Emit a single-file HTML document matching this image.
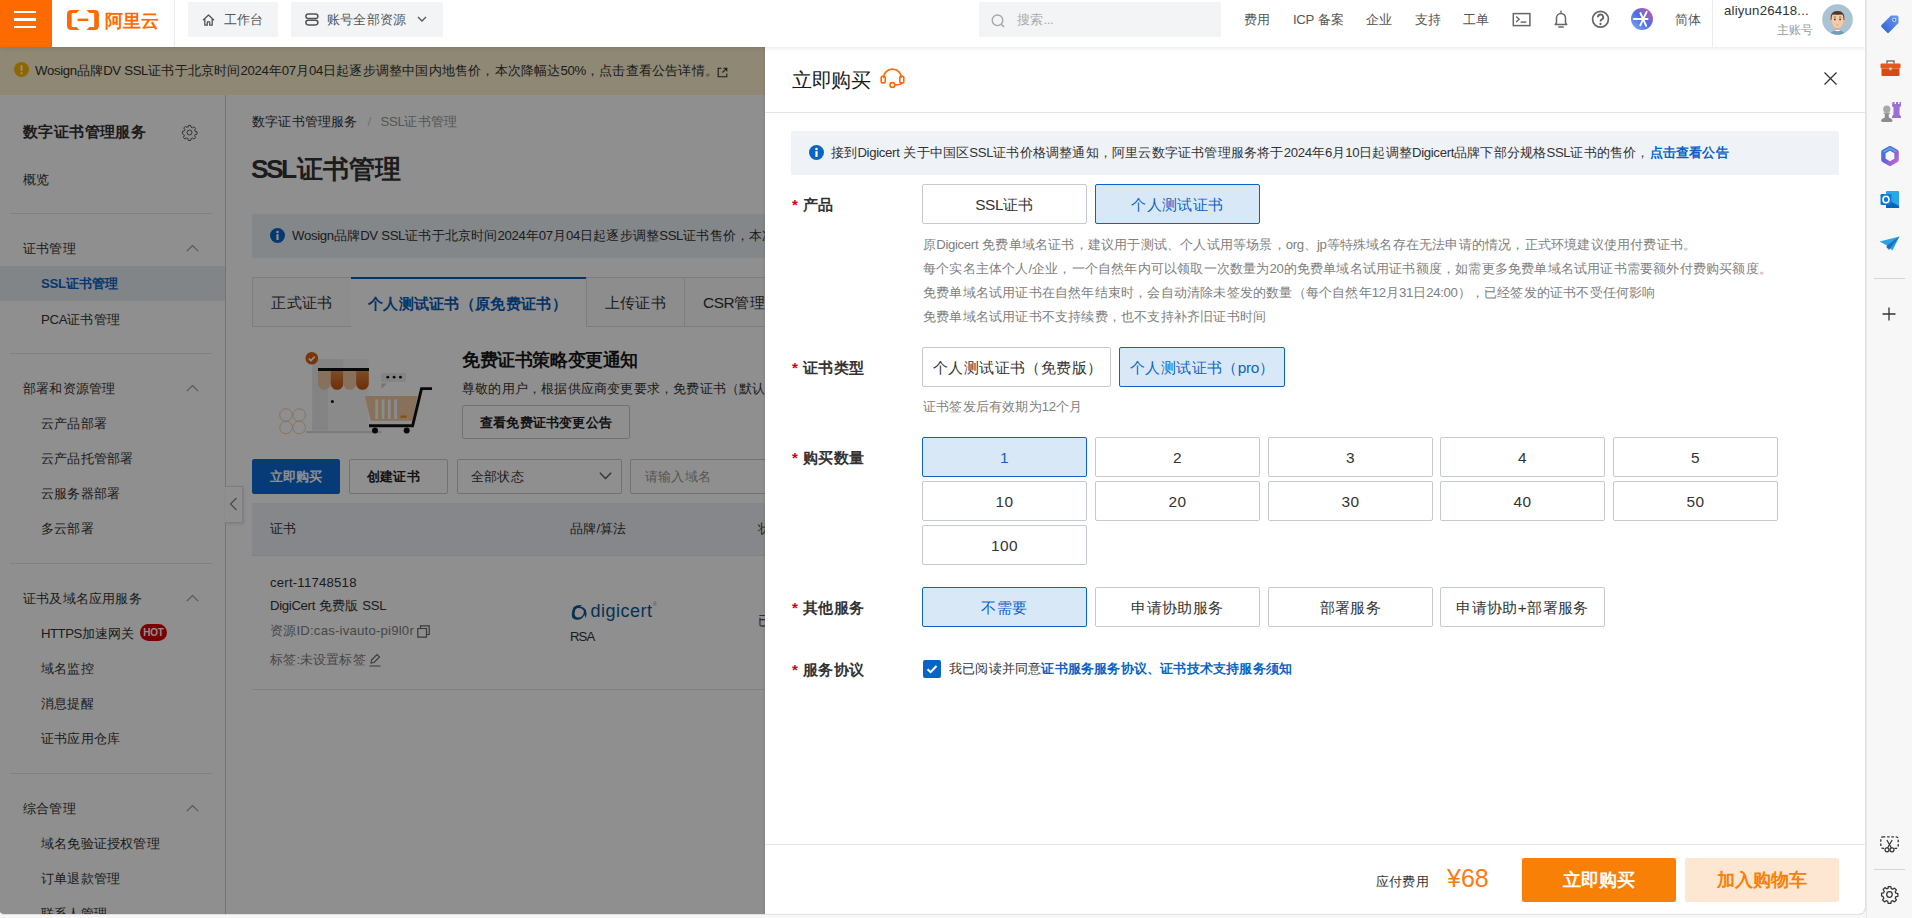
<!DOCTYPE html>
<html><head><meta charset="utf-8">
<style>
*{box-sizing:border-box;margin:0;padding:0}
html,body{width:1912px;height:918px;overflow:hidden;background:#f7f7f7;font-family:"Liberation Sans",sans-serif;color:#333}
.a{position:absolute;white-space:nowrap}
#page{position:absolute;left:0;top:0;width:1866px;height:915px;overflow:hidden;background:#fff;border-radius:0 0 7px 4px;border-right:1px solid #e2e2e2;border-bottom:1px solid #e2e2e2}
#top svg{z-index:1}
#top{position:absolute;left:0;top:0;width:1866px;height:47px;background:#fff;z-index:5;box-shadow:0 1px 5px rgba(0,0,0,.1)}
.tb{position:absolute;top:2px;height:35px;background:#f3f4f6;border-radius:2px}
.nav{position:absolute;top:11px;font-size:13.2px;letter-spacing:.2px;color:#555;line-height:18px}
#banner{position:absolute;left:0;top:47px;width:1866px;height:48px;background:#fdf2cf}
#side{position:absolute;left:0;top:95px;width:226px;height:820px;background:#fff;border-right:1px solid #ccd1d7}
#main{position:absolute;left:226px;top:95px;width:1640px;height:820px;background:#fff}
#mask{position:absolute;left:0;top:47px;width:1866px;height:868px;background:rgba(0,0,0,.44);z-index:3}
#drawer{position:absolute;left:765px;top:47px;width:1101px;height:868px;background:#fff;z-index:4;box-shadow:-1px 0 2px rgba(0,0,0,.08)}
#rb{position:absolute;left:1866px;top:0;width:46px;height:918px;background:#f7f7f7}

.lbl{position:absolute;left:27px;margin-top:1px;font-size:15.4px;font-weight:bold;color:#333;line-height:20px;white-space:nowrap;letter-spacing:.5px}
.lbl:before{content:"*";color:#d0021b;font-weight:bold;margin-right:5px;font-size:15px;letter-spacing:0}
.opt{position:absolute;height:40px;border:1px solid #c5c9d0;border-radius:2px;background:#fff;font-size:15.4px;color:#333;line-height:38px;padding-top:1px;text-align:center;white-space:nowrap;letter-spacing:.4px}
.opt.sel{border-color:#0a64c8;background:#d9e8f6;color:#0a64c8}
.desc{position:absolute;left:158px;font-size:13.2px;color:#808080;line-height:18px;white-space:nowrap;letter-spacing:.2px}
.f13{font-size:13.2px;letter-spacing:.2px}

.t13{position:absolute;white-space:nowrap;font-size:13.2px;letter-spacing:.2px;line-height:18px;color:#333}
.sdiv{position:absolute;left:10px;width:202px;height:1px;background:#e5e5e5}
.chev{position:absolute;left:186px;width:13px;height:8px}

.btn{position:absolute;height:35px;border:1px solid #c9ccd1;border-radius:2px;background:#fff;font-size:13.2px;line-height:33px;text-align:center;white-space:nowrap;color:#333}
.tab{position:absolute;top:182px;height:50px;border:1px solid #dcdfe4;background:#fbfbfc;font-size:15.4px;letter-spacing:.4px;line-height:50px;white-space:nowrap;color:#333;text-align:center}
.l{font-style:normal;letter-spacing:-.025em}
</style></head><body>
<div id="page">
  <div id="top">
    <div class="a" style="left:0;top:0;width:52px;height:47px;background:#ff6a00"></div>
    <div class="a" style="left:14px;top:11px;width:22px;height:2px;background:#fff"></div>
    <div class="a" style="left:14px;top:18px;width:22px;height:2.5px;background:#fff"></div>
    <div class="a" style="left:14px;top:26px;width:22px;height:2px;background:#fff"></div>
    <div class="a" style="left:174px;top:0;width:1px;height:47px;background:#ececec"></div>
    <svg class="a" style="left:67px;top:10px" width="92" height="21" viewBox="0 0 92 21">
      <path d="M4.2 0 H12.4 L9.6 2.9 H5.6 Q4.7 2.9 4.7 3.8 V16.2 Q4.7 17.1 5.6 17.1 H9.6 L12.4 20 H4.2 Q0 20 0 15.8 V4.2 Q0 0 4.2 0Z" fill="#ff6a00"/>
      <path d="M27.7 0 H19.5 L22.3 2.9 H26.3 Q27.2 2.9 27.2 3.8 V16.2 Q27.2 17.1 26.3 17.1 H22.3 L19.5 20 H27.7 Q31.9 20 31.9 15.8 V4.2 Q31.9 0 27.7 0Z" fill="#ff6a00"/>
      <rect x="10.6" y="8.6" width="10.7" height="2.4" fill="#ff6a00"/>
    </svg>
    <div class="a" style="left:105px;top:10px;font-size:17.6px;font-weight:bold;line-height:22px;color:#ff6a00;letter-spacing:-.2px">阿里云</div>
    <svg class="a" style="left:202px;top:14px" width="13" height="12" viewBox="0 0 13 12"><path d="M1 6.2 L6.5 1 L12 6.2 M2.8 4.8 V11.2 H5.3 V7.8 H7.7 V11.2 H10.2 V4.8" fill="none" stroke="#555" stroke-width="1.3" stroke-linejoin="round"/></svg>
    <svg class="a" style="left:305px;top:13px" width="14" height="13" viewBox="0 0 14 13"><rect x="0.9" y="0.9" width="12" height="4.6" rx="2.3" fill="none" stroke="#555" stroke-width="1.5"/><rect x="0.9" y="7.3" width="12" height="4.6" rx="2.3" fill="none" stroke="#555" stroke-width="1.5"/></svg>
    <svg class="a" style="left:417px;top:16px" width="10" height="7" viewBox="0 0 10 7"><path d="M1 1 L5 5 L9 1" fill="none" stroke="#555" stroke-width="1.3"/></svg>
    <svg class="a" style="left:991px;top:14px" width="15" height="14" viewBox="0 0 15 14"><circle cx="6.5" cy="6.3" r="5.3" fill="none" stroke="#a8a8a8" stroke-width="1.4"/><path d="M10.3 10.2 L13 12.9" stroke="#a8a8a8" stroke-width="1.5"/></svg>
    <svg class="a" style="left:1512px;top:12px" width="19" height="15" viewBox="0 0 19 15"><rect x="1.3" y="1.6" width="16.6" height="12" fill="none" stroke="#666" stroke-width="1.5"/><path d="M4.2 4.4 L7.2 7.2 L4.2 10" fill="none" stroke="#666" stroke-width="1.4"/><rect x="8.6" y="9.4" width="5.8" height="1.4" fill="#666"/></svg>
    <svg class="a" style="left:1553px;top:10px" width="16" height="19" viewBox="0 0 16 19"><path d="M8 1.2 V2.2 M2.2 14.6 H13.8 L12.5 12.8 V8 A4.5 4.5 0 0 0 3.5 8 V12.8z M5.8 17 H10.2" fill="none" stroke="#666" stroke-width="1.5" stroke-linejoin="round" stroke-linecap="round"/></svg>
    <svg class="a" style="left:1591px;top:10px" width="19" height="19" viewBox="0 0 19 19"><circle cx="9.5" cy="9.3" r="7.9" fill="none" stroke="#666" stroke-width="1.7"/><path d="M7 7.3 A2.6 2.6 0 1 1 10.4 9.6 Q9.5 10.1 9.5 11.6" fill="none" stroke="#666" stroke-width="1.9"/><circle cx="9.5" cy="14" r="1.15" fill="#666"/></svg>
    <svg class="a" style="left:1631px;top:8px" width="22" height="22" viewBox="0 0 22 22"><defs><linearGradient id="aig" x1="1" y1="0" x2="0" y2="1"><stop offset="0" stop-color="#e0559a"/><stop offset=".5" stop-color="#4a6fe6"/><stop offset="1" stop-color="#7fb0f5"/></linearGradient></defs><circle cx="11" cy="11" r="11" fill="url(#aig)"/><path d="M2.8 11 H16.6 M9.3 17.3 L15.6 3.8 M9.4 5 L15.2 17.8" stroke="#fff" stroke-width="1.9" stroke-linecap="round"/></svg>
    <svg class="a" style="left:1822px;top:4px" width="31" height="31" viewBox="0 0 31 31"><defs><clipPath id="avc"><circle cx="15.5" cy="15.5" r="15.3"/></clipPath></defs><circle cx="15.5" cy="15.5" r="15.3" fill="#a9c3d3"/><g clip-path="url(#avc)"><path d="M7.5 31 Q8.5 27 15.5 26.2 Q22.5 27 23.5 31z" fill="#6f9dbf"/><path d="M13.3 22 H17.7 V26.8 Q15.5 27.8 13.3 26.8z" fill="#e9a58e"/><rect x="13.3" y="26" width="4.4" height="1" fill="#fff"/><ellipse cx="8.9" cy="16.2" rx="1.2" ry="1.8" fill="#f2b99a"/><ellipse cx="22.1" cy="16.2" rx="1.2" ry="1.8" fill="#f2b99a"/><path d="M9.2 11 Q9.2 24 15.5 24.3 Q21.8 24 21.8 11z" fill="#f7caa6"/><path d="M8.6 16.5 Q7.6 6.8 15.5 6.9 Q23.4 6.8 22.4 16.5 L21.6 16 Q21.6 11.8 20.4 10.6 Q15.5 10.9 10.6 10.6 Q9.4 11.8 9.4 16z" fill="#5a3327"/><path d="M11.6 13.3 Q12.8 12.6 14 13.1 M17 13.1 Q18.2 12.6 19.4 13.3" stroke="#6b4a3a" stroke-width=".7" fill="none"/><circle cx="12.9" cy="15.4" r=".85" fill="#333"/><circle cx="18.1" cy="15.4" r=".85" fill="#333"/><path d="M14.5 21 H16.5" stroke="#c98a72" stroke-width=".7"/></g></svg>

    <div class="tb" style="left:188px;width:90px"></div>
    <div class="tb" style="left:291px;width:152px"></div>
    <div class="nav" style="left:224px">工作台</div>
    <div class="nav" style="left:327px">账号全部资源</div>
    <div class="tb" style="left:979px;width:242px"></div>
    <div class="nav" style="left:1017px;color:#aaa">搜索<i class="l">...</i></div>
    <div class="nav" style="left:1244px">费用</div>
    <div class="nav" style="left:1293px"><i class="l">ICP</i> 备案</div>
    <div class="nav" style="left:1366px">企业</div>
    <div class="nav" style="left:1415px">支持</div>
    <div class="nav" style="left:1463px">工单</div>
    <div class="nav" style="left:1675px">简体</div>
    <div class="a" style="left:1712px;top:0;width:1px;height:47px;background:#ececec"></div>
    <div class="nav" style="left:1724px;top:2px;color:#333">aliyun26418...</div>
    <div class="nav" style="left:1777px;top:21px;color:#999;font-size:12px;letter-spacing:0">主账号</div>
  </div>
  <div id="banner">
    <svg class="a" style="left:14px;top:15px" width="15" height="15" viewBox="0 0 15 15"><circle cx="7.5" cy="7.5" r="7.5" fill="#ffb800"/><rect x="6.5" y="3" width="2" height="6" rx="1" fill="#fff"/><circle cx="7.5" cy="11.3" r="1.1" fill="#fff"/></svg>
    <div class="t13" style="left:35px;top:15px"><i class="l">Wosign</i>品牌<i class="l">DV SSL</i>证书于北京时间<i class="l">2024</i>年<i class="l">07</i>月<i class="l">04</i>日起逐步调整中国内地售价，本次降幅达<i class="l">50%</i>，点击查看公告详情。</div>
    <svg class="a" style="left:717px;top:20px" width="11" height="11" viewBox="0 0 11 11"><path d="M4.5 1.2 H1.2 V9.8 H9.8 V6.5 M6.5 1.2 H9.8 V4.5 M9.6 1.4 L5.5 5.5" fill="none" stroke="#333" stroke-width="1.1"/></svg>
  </div>
  <div id="side">
    <div class="a" style="left:23px;top:27px;font-size:15.4px;font-weight:bold;letter-spacing:.4px;line-height:20px;color:#333">数字证书管理服务</div>
    <svg class="a" style="left:181px;top:29px" width="17" height="17" viewBox="0 0 24 24"><path d="M12 8.5a3.5 3.5 0 1 0 0 7 3.5 3.5 0 0 0 0-7z M10.3 2h3.4l.5 2.6 1.9.8 2.2-1.5 2.4 2.4-1.5 2.2.8 1.9 2.6.5v3.4l-2.6.5-.8 1.9 1.5 2.2-2.4 2.4-2.2-1.5-1.9.8-.5 2.6h-3.4l-.5-2.6-1.9-.8-2.2 1.5-2.4-2.4 1.5-2.2-.8-1.9L2 13.7v-3.4l2.6-.5.8-1.9-1.5-2.2 2.4-2.4 2.2 1.5 1.9-.8z" fill="none" stroke="#555" stroke-width="1.4" stroke-linejoin="round"/></svg>
    <div class="t13" style="left:23px;top:76px">概览</div>
    <div class="sdiv" style="top:118px"></div>
    <div class="t13" style="left:23px;top:145px">证书管理</div><svg class="chev" style="top:149px" viewBox="0 0 13 8"><path d="M0.8 7.2 L6.5 1.5 L12.2 7.2" fill="none" stroke="#999" stroke-width="1.1"/></svg>
    <div class="a" style="left:0;top:171px;width:225px;height:35px;background:#e8edf3"></div>
    <div class="t13" style="left:41px;top:180px;font-weight:bold;color:#0a64c8"><i class="l">SSL</i>证书管理</div>
    <div class="t13" style="left:41px;top:216px"><i class="l">PCA</i>证书管理</div>
    <div class="sdiv" style="top:258px"></div>
    <div class="t13" style="left:23px;top:285px">部署和资源管理</div><svg class="chev" style="top:289px" viewBox="0 0 13 8"><path d="M0.8 7.2 L6.5 1.5 L12.2 7.2" fill="none" stroke="#999" stroke-width="1.1"/></svg>
    <div class="t13" style="left:41px;top:320px">云产品部署</div>
    <div class="t13" style="left:41px;top:355px">云产品托管部署</div>
    <div class="t13" style="left:41px;top:390px">云服务器部署</div>
    <div class="t13" style="left:41px;top:425px">多云部署</div>
    <div class="sdiv" style="top:468px"></div>
    <div class="t13" style="left:23px;top:495px">证书及域名应用服务</div><svg class="chev" style="top:499px" viewBox="0 0 13 8"><path d="M0.8 7.2 L6.5 1.5 L12.2 7.2" fill="none" stroke="#999" stroke-width="1.1"/></svg>
    <div class="t13" style="left:41px;top:530px"><span style="letter-spacing:-.5px">HTTPS</span>加速网关</div>
    <div class="a" style="left:140px;top:529px;width:27px;height:17px;border-radius:9px;background:#d80000;color:#fff;font-size:10px;font-weight:bold;line-height:17px;text-align:center;letter-spacing:-.2px">HOT</div>
    <div class="t13" style="left:41px;top:565px">域名监控</div>
    <div class="t13" style="left:41px;top:600px">消息提醒</div>
    <div class="t13" style="left:41px;top:635px">证书应用仓库</div>
    <div class="sdiv" style="top:678px"></div>
    <div class="t13" style="left:23px;top:705px">综合管理</div><svg class="chev" style="top:709px" viewBox="0 0 13 8"><path d="M0.8 7.2 L6.5 1.5 L12.2 7.2" fill="none" stroke="#999" stroke-width="1.1"/></svg>
    <div class="t13" style="left:41px;top:740px">域名免验证授权管理</div>
    <div class="t13" style="left:41px;top:775px">订单退款管理</div>
    <div class="t13" style="left:41px;top:810px">联系人管理</div>
  </div>
  <div id="main">
    <div class="t13" style="left:26px;top:18px">数字证书管理服务<span style="color:#ccc;margin:0 9px 0 10px">/</span><span style="color:#999"><i class="l">SSL</i>证书管理</span></div>
    <div class="a" style="left:25px;top:57px;font-size:26.4px;font-weight:bold;line-height:34px;color:#333;letter-spacing:.2px"><i class="l" style="letter-spacing:-2.6px;margin-right:2px">SSL</i>证书管理</div>
    <div class="a" style="left:26px;top:119px;width:1000px;height:44px;background:#ebf0f7;border-radius:2px"></div>
    <svg class="a" style="left:44px;top:133px" width="15" height="15" viewBox="0 0 15 15"><circle cx="7.5" cy="7.5" r="7.5" fill="#0a64c8"/><circle cx="7.5" cy="4" r="1.3" fill="#fff"/><rect x="6.4" y="6.2" width="2.2" height="5.8" fill="#fff"/></svg>
    <div class="t13" style="left:66px;top:132px"><i class="l">Wosign</i>品牌<i class="l">DV SSL</i>证书于北京时间<i class="l">2024</i>年<i class="l">07</i>月<i class="l">04</i>日起逐步调整<i class="l">SSL</i>证书售价，本次降幅达<i class="l">50%</i></div>
    <div class="a" style="left:26px;top:231px;width:1000px;height:1px;background:#dcdfe4"></div>
    <div class="tab" style="left:26px;width:100px">正式证书</div>
    <div class="a" style="left:125px;top:182px;width:236px;height:50px;background:#fff;border-right:1px solid #dcdfe4;border-top:2px solid #0a5cb5"></div>
    <div class="a" style="left:142px;top:198.5px;font-size:15.4px;font-weight:bold;letter-spacing:.3px;line-height:20px;color:#0a5cb5">个人测试证书（原免费证书）</div>
    <div class="tab" style="left:360px;width:99px">上传证书</div>
    <div class="tab" style="left:458px;width:120px;text-align:left;padding-left:18px"><i class="l">CSR</i>管理</div>

    <svg class="a" style="left:44px;top:245px" width="170" height="105" viewBox="0 0 170 105">
      <defs><linearGradient id="ag" x1="0" y1="0" x2="0" y2="1"><stop offset="0" stop-color="#d98a4a"/><stop offset="1" stop-color="#c8500a"/></linearGradient></defs>
      <rect x="42.3" y="19" width="56" height="71.5" fill="#f6f6f6"/>
      <rect x="42.3" y="19" width="31" height="9" fill="#ececec"/>
      <rect x="42.3" y="28" width="15.5" height="62.5" fill="#e9e9e9"/>
      <rect x="36" y="91" width="75.6" height="2.2" fill="#dcdcdc"/>
      <rect x="48" y="28" width="51" height="3" fill="#111"/>
      <path d="M48 31 h12.7 v12.5 a6.35 6.35 0 0 1 -12.7 0z" fill="#f0c8a4"/>
      <path d="M60.7 31 h12.7 v12.5 a6.35 6.35 0 0 1 -12.7 0z" fill="url(#ag)"/>
      <path d="M73.4 31 h12.7 v12.5 a6.35 6.35 0 0 1 -12.7 0z" fill="#f0c8a4"/>
      <path d="M86.1 31 h12.7 v12.5 a6.35 6.35 0 0 1 -12.7 0z" fill="url(#ag)"/>
      <circle cx="41.8" cy="18.3" r="6.3" fill="#d4620f"/>
      <path d="M38.9 18.6 l2 2 l3.8 -4" stroke="#fff" stroke-width="1.6" fill="none"/>
      <circle cx="62.4" cy="61.4" r="1.5" fill="#111"/>
      <rect x="111" y="33" width="25" height="9" fill="#eeeeee"/>
      <path d="M111.5 43.5 l5.5 0 l-5.5 5z" fill="#cfcfcf"/>
      <circle cx="117.8" cy="37.2" r="1.4" fill="#111"/><circle cx="124.1" cy="37.2" r="1.4" fill="#111"/><circle cx="130.4" cy="37.2" r="1.4" fill="#111"/>
      <path d="M95 56 H147.6 L142.4 80.7 H100.7z" fill="#f2c9a0"/>
      <rect x="105.3" y="59.5" width="2.9" height="19.5" fill="#f8f8f8"/><rect x="111.6" y="59.5" width="2.9" height="19.5" fill="#f8f8f8"/><rect x="117.8" y="59.5" width="2.9" height="19.5" fill="#f8f8f8"/><rect x="124.1" y="59.5" width="2.9" height="19.5" fill="#f8f8f8"/>
      <rect x="130.4" y="75.5" width="6.3" height="2.3" fill="#e8902a"/>
      <path d="M162 48.6 H151.5 L142.6 85.8 H99" stroke="#111" stroke-width="2.9" fill="none"/>
      <circle cx="105" cy="90.4" r="3" fill="#111"/><circle cx="136.7" cy="90.4" r="3" fill="#111"/>
      <g fill="none" stroke="#f0cfae" stroke-width="1"><circle cx="16" cy="75" r="6.3"/><circle cx="29.2" cy="75" r="6.3"/><circle cx="16" cy="87.5" r="6.3"/><circle cx="29.2" cy="87.5" r="6.3"/></g>
    </svg>
    <div class="a" style="left:236px;top:254px;font-size:17.6px;font-weight:bold;letter-spacing:-.4px;line-height:22px;color:#1a1a1a">免费证书策略变更通知</div>
    <div class="t13" style="left:236px;top:285px">尊敬的用户，根据供应商变更要求，免费证书（默认</div>
    <div class="btn" style="left:236px;top:310px;width:168px;height:34px;line-height:34px;font-weight:bold;letter-spacing:.2px;color:#222">查看免费证书变更公告</div>

    <div class="btn" style="left:26px;top:364px;width:88px;background:#0b6ad6;border-color:#0b6ad6;color:#fff;font-weight:bold;letter-spacing:.2px">立即购买</div>
    <div class="btn" style="left:123px;top:364px;width:99px;font-weight:bold;letter-spacing:.2px;color:#222;text-align:left;padding-left:17px">创建证书</div>
    <div class="btn" style="left:231px;top:364px;width:165px;text-align:left;padding-left:13px;letter-spacing:.2px">全部状态</div>
    <svg class="a" style="left:373px;top:377px" width="13" height="8" viewBox="0 0 13 8"><path d="M0.8 0.8 L6.5 6.5 L12.2 0.8" fill="none" stroke="#555" stroke-width="1.3"/></svg>
    <div class="btn" style="left:404px;top:364px;width:300px;text-align:left;padding-left:14px;color:#999;letter-spacing:.2px">请输入域名</div>
    <div class="a" style="left:26px;top:408px;width:1000px;height:53px;background:#eef1f6;border-bottom:1px solid #e3e6eb"></div>
    <div class="t13" style="left:44px;top:425px">证书</div>
    <div class="t13" style="left:344px;top:425px">品牌<i class="l">/</i>算法</div>
    <div class="t13" style="left:532px;top:425px">状态</div>
    <div class="t13" style="left:44px;top:479px">cert-11748518</div>
    <div class="t13" style="left:44px;top:502px"><i class="l">DigiCert</i> 免费版 <i class="l">SSL</i></div>
    <div class="t13" style="left:44px;top:527px;color:#808080">资源ID:cas-ivauto-pi9l0r</div>
    <svg class="a" style="left:191px;top:530px" width="13" height="13" viewBox="0 0 13 13"><path d="M3.5 3.5 V0.8 H12.2 V9.5 H9.5 M0.8 3.5 H9.5 V12.2 H0.8z" fill="none" stroke="#666" stroke-width="1.2"/></svg>
    <div class="t13" style="left:44px;top:556px;color:#808080">标签<i class="l">:</i>未设置标签</div>
    <svg class="a" style="left:143px;top:558px" width="12" height="14" viewBox="0 0 12 14"><path d="M2 10 L2.5 7 L8 1.5 L10.5 4 L5 9.5z M0.5 13 H11.5" fill="none" stroke="#666" stroke-width="1.1"/></svg>
    <div class="a" style="left:26px;top:594px;width:1000px;height:1px;background:#e3e6eb"></div>
    <svg class="a" style="left:345px;top:509px" width="20" height="19" viewBox="0 0 20 19"><path d="M2.5 3.2 Q6 0.2 11.5 1.2 Q9.5 1.6 9 2.6 Q13.5 3.2 15 6.5 Q16.5 10.5 14.8 14.3 Q14.2 11.5 13.2 11 Q11.5 15.5 6.5 15.8 Q3.2 16 1.2 13.5 Q0 9 2.5 3.2z M4.2 6 Q2.8 9.8 4.5 12.5 Q7.5 14.5 11 12.2 Q13.5 9.5 12.5 6.2 Q10.5 3.5 6.8 4 Q5 4.6 4.2 6z" fill="#0a5a96" fill-rule="evenodd"/></svg>
    <div class="a" style="left:364.5px;top:506px;font-size:18px;line-height:20px;color:#0a5a96;letter-spacing:.5px">digicert</div>
    <div class="a" style="left:427px;top:507px;font-size:5px;line-height:5px;color:#6a9ac0">®</div>
    <div class="t13" style="left:344px;top:533px;letter-spacing:-.9px">RSA</div>
    <div class="t13" style="left:532px;top:517px">已</div>
  </div>
  <div class="a" style="left:225px;top:486px;width:18px;height:37px;background:#fff;border:1px solid #dcdfe4;border-left:none;box-shadow:1px 1px 3px rgba(0,0,0,.12)"></div>
  <svg class="a" style="left:229px;top:497px" width="9" height="14" viewBox="0 0 9 14"><path d="M7.5 1 L1.5 7 L7.5 13" fill="none" stroke="#888" stroke-width="1.3"/></svg>
  <div id="mask"></div>
  <div id="drawer">
    <div class="a" style="left:27px;top:21px;font-size:19.8px;letter-spacing:-.4px;line-height:24px;color:#1a1a1a">立即购买</div>
    <svg class="a" style="left:115px;top:20px" width="26" height="24" viewBox="0 0 26 24"><path d="M3.6 11 A8.9 8.9 0 0 1 21.4 11" fill="none" stroke="#ff6a00" stroke-width="1.7"/><rect x="1.2" y="9.3" width="4" height="6.6" rx="1.2" fill="none" stroke="#ff6a00" stroke-width="1.6"/><rect x="19.8" y="9.3" width="4" height="6.6" rx="1.2" fill="none" stroke="#ff6a00" stroke-width="1.6"/><path d="M21.8 15.9 Q21.5 18 14.8 18" fill="none" stroke="#ff6a00" stroke-width="1.6"/><circle cx="12.4" cy="18" r="2.4" fill="none" stroke="#ff6a00" stroke-width="1.6"/></svg>
    <svg class="a" style="left:1059px;top:25px" width="13" height="13" viewBox="0 0 13 13"><path d="M0.5 0.5 L12.5 12.5 M12.5 0.5 L0.5 12.5" stroke="#333" stroke-width="1.3"/></svg>
    <div class="a" style="left:0;top:65px;width:1101px;height:1px;background:#e5e5e5"></div>
    <div class="a" style="left:26px;top:84px;width:1048px;height:44px;background:#eff2f7;border-radius:2px"></div>
    <svg class="a" style="left:44px;top:98px" width="15" height="15" viewBox="0 0 15 15"><circle cx="7.5" cy="7.5" r="7.5" fill="#0a64c8"/><circle cx="7.5" cy="4" r="1.3" fill="#fff"/><rect x="6.4" y="6.2" width="2.2" height="5.8" fill="#fff"/></svg>
    <div class="a" style="left:66px;top:97px;font-size:13.2px;letter-spacing:.2px;line-height:18px;color:#333">接到<i class="l">Digicert</i> 关于中国区<i class="l">SSL</i>证书价格调整通知，阿里云数字证书管理服务将于<i class="l">2024</i>年<i class="l">6</i>月<i class="l">10</i>日起调整<i class="l">Digicert</i>品牌下部分规格<i class="l">SSL</i>证书的售价，<b style="color:#0a64c8">点击查看公告</b></div>

    <div class="lbl" style="top:147px">产品</div>
    <div class="opt" style="left:157px;top:137px;width:165px"><i class="l">SSL</i>证书</div>
    <div class="opt sel" style="left:330px;top:137px;width:165px">个人测试证书</div>
    <div class="desc" style="top:189px">原<i class="l">Digicert</i> 免费单域名证书，建议用于测试、个人试用等场景，<i class="l">org</i>、<i class="l">jp</i>等特殊域名存在无法申请的情况，正式环境建议使用付费证书。</div>
    <div class="desc" style="top:213px">每个实名主体个人<i class="l">/</i>企业，一个自然年内可以领取一次数量为<i class="l">20</i>的免费单域名试用证书额度，如需更多免费单域名试用证书需要额外付费购买额度。</div>
    <div class="desc" style="top:237px">免费单域名试用证书在自然年结束时，会自动清除未签发的数量（每个自然年<i class="l">12</i>月<i class="l">31</i>日<i class="l">24:00</i>），已经签发的证书不受任何影响</div>
    <div class="desc" style="top:261px">免费单域名试用证书不支持续费，也不支持补齐旧证书时间</div>

    <div class="lbl" style="top:310px">证书类型</div>
    <div class="opt" style="left:157px;top:300px;width:189px;text-align:left;padding-left:10px">个人测试证书（免费版）</div>
    <div class="opt sel" style="left:354px;top:300px;width:166px;text-align:left;padding-left:10px">个人测试证书（<i class="l">pro</i>）</div>
    <div class="desc" style="top:351px">证书签发后有效期为<i class="l">12</i>个月</div>

    <div class="lbl" style="top:400px">购买数量</div>
    <div class="opt sel" style="left:157px;top:390px;width:165px">1</div>
    <div class="opt" style="left:330px;top:390px;width:165px">2</div>
    <div class="opt" style="left:503px;top:390px;width:165px">3</div>
    <div class="opt" style="left:675px;top:390px;width:165px">4</div>
    <div class="opt" style="left:848px;top:390px;width:165px">5</div>
    <div class="opt" style="left:157px;top:434px;width:165px">10</div>
    <div class="opt" style="left:330px;top:434px;width:165px">20</div>
    <div class="opt" style="left:503px;top:434px;width:165px">30</div>
    <div class="opt" style="left:675px;top:434px;width:165px">40</div>
    <div class="opt" style="left:848px;top:434px;width:165px">50</div>
    <div class="opt" style="left:157px;top:478px;width:165px">100</div>

    <div class="lbl" style="top:550px">其他服务</div>
    <div class="opt sel" style="left:157px;top:540px;width:165px">不需要</div>
    <div class="opt" style="left:330px;top:540px;width:165px">申请协助服务</div>
    <div class="opt" style="left:503px;top:540px;width:165px">部署服务</div>
    <div class="opt" style="left:675px;top:540px;width:165px">申请协助+部署服务</div>

    <div class="lbl" style="top:612px">服务协议</div>
    <svg class="a" style="left:158px;top:613px" width="18" height="18" viewBox="0 0 18 18"><rect width="18" height="18" rx="2" fill="#0a64c8"/><path d="M4.5 9.2 L7.6 12.2 L13.5 6" fill="none" stroke="#fff" stroke-width="2"/></svg>
    <div class="a" style="left:184px;top:613px;font-size:13.2px;letter-spacing:.2px;line-height:18px;color:#333">我已阅读并同意<b style="color:#0a64c8">证书服务服务协议、证书技术支持服务须知</b></div>

    <div class="a" style="left:0;top:797px;width:1101px;height:1px;background:#e5e5e5"></div>
    <div class="a" style="left:611px;top:826px;font-size:13.2px;letter-spacing:.2px;line-height:18px;color:#333">应付费用</div>
    <div class="a" style="left:682px;top:816px;font-size:25px;line-height:30px;color:#ff7a12">¥68</div>
    <div class="a" style="left:757px;top:811px;width:154px;height:44px;background:#f98007;border-radius:2px;color:#fff;font-weight:bold;font-size:17.6px;line-height:44px;text-align:center">立即购买</div>
    <div class="a" style="left:920px;top:811px;width:154px;height:44px;background:#fde7d2;border-radius:2px;color:#f98007;font-weight:bold;font-size:17.6px;line-height:44px;text-align:center">加入购物车</div>
  </div>
</div>
<div id="rb">
  <div class="a" style="left:0;top:0;width:1px;height:918px;background:#e8e8e8"></div>
  <svg class="a" style="left:14px;top:14px" width="20" height="20" viewBox="0 0 20 20"><defs><linearGradient id="tg" x1="1" y1="0" x2="0" y2="1"><stop offset="0" stop-color="#6a9cf0"/><stop offset="1" stop-color="#2f5fd0"/></linearGradient></defs><path d="M11 1.5 H17 Q18.5 1.5 18.5 3 V9 L9 18.5 Q8 19.5 7 18.5 L1.5 13 Q0.5 12 1.5 11z" fill="url(#tg)"/><circle cx="14.3" cy="5.7" r="2" fill="#fff"/><circle cx="14.3" cy="5.7" r="1.2" fill="#2f5fd0"/></svg>
  <svg class="a" style="left:14px;top:59px" width="21" height="18" viewBox="0 0 21 18"><path d="M7 4.5 V2 H14 V4.5" fill="none" stroke="#777" stroke-width="1.6"/><rect x="0.5" y="4.5" width="20" height="5" rx="1" fill="#e2581e"/><rect x="1.5" y="9.5" width="18" height="7.5" rx="1" fill="#d94a12"/><circle cx="10.5" cy="9.8" r="1.6" fill="#bcc6cc"/></svg>
  <svg class="a" style="left:14px;top:101px" width="21" height="22" viewBox="0 0 21 22"><path d="M12.5 1 H14.5 V3 H16 V1 H18 V3 H19.5 V1 H21 V5 L19.5 6.5 V13.5 L21 15.5 V17 H12 V15.5 L13.5 13.5 V6.5 L12 5z" fill="#9a6fd6"/><circle cx="6.8" cy="8.2" r="3.6" fill="#a8a8a8"/><path d="M4 12 H9.6 L8.8 13 V16.5 Q12 17.5 12.5 19 Q12.8 21 11 21 H2.6 Q0.8 21 1.1 19 Q1.6 17.5 4.8 16.5 V13z" fill="#8c8c8c"/><rect x="3.5" y="11.5" width="6.6" height="1.6" rx=".8" fill="#9a9a9a"/></svg>
  <svg class="a" style="left:14px;top:146px" width="20" height="20" viewBox="0 0 20 20"><defs><linearGradient id="mg" x1="0" y1="0" x2="1" y2="1"><stop offset="0" stop-color="#2f7fe0"/><stop offset=".45" stop-color="#6a5fd8"/><stop offset="1" stop-color="#c36ad6"/></linearGradient></defs><path d="M10 2.2 L16.6 6 V14 L10 17.8 L3.4 14 V6z" fill="none" stroke="url(#mg)" stroke-width="4.4" stroke-linejoin="round"/><path d="M3.4 6 L10 2.2 L16.6 6" fill="none" stroke="#58c2f0" stroke-width="1.6" stroke-linejoin="round" opacity=".7"/></svg>
  <svg class="a" style="left:14px;top:190px" width="20" height="20" viewBox="0 0 20 20"><rect x="6" y="1" width="13" height="17" rx="1" fill="#28a8ea"/><path d="M6 9 L19 16 V18 H6z" fill="#0a64b4"/><rect x="0.5" y="4" width="11" height="11" rx="1.2" fill="#0a78d4"/><ellipse cx="6" cy="9.5" rx="3" ry="3.3" fill="none" stroke="#fff" stroke-width="1.6"/></svg>
  <svg class="a" style="left:13px;top:236px" width="21" height="15" viewBox="0 0 21 15"><path d="M0.5 5.5 L20.5 0.5 L13.5 14.5 L8 9.5z" fill="#2aa3e8"/><path d="M8 9.5 L20.5 0.5 L10 14z" fill="#1a6fc0"/><path d="M8 9.5 L10 14 L7.5 11z" fill="#0d3f7a"/></svg>
  <div class="a" style="left:8px;top:278px;width:31px;height:1px;background:#d5d5d5"></div>
  <svg class="a" style="left:16px;top:307px" width="14" height="14" viewBox="0 0 14 14"><path d="M7 0.5 V13.5 M0.5 7 H13.5" stroke="#333" stroke-width="1.3"/></svg>
  <svg class="a" style="left:14px;top:836px" width="19" height="17" viewBox="0 0 19 17"><rect x="0.8" y="0.8" width="17.4" height="11.5" rx="2" fill="none" stroke="#333" stroke-width="1.3" stroke-dasharray="2.5 1.8"/><path d="M6.8 4 L11.5 12 M12.2 4 L7.5 12" stroke="#333" stroke-width="1.2"/><circle cx="7" cy="13.8" r="2" fill="#f7f7f7" stroke="#333" stroke-width="1.2"/><circle cx="12" cy="13.8" r="2" fill="#f7f7f7" stroke="#333" stroke-width="1.2"/></svg>
  <div class="a" style="left:8px;top:869px;width:31px;height:1px;background:#d5d5d5"></div>
  <svg class="a" style="left:14px;top:885px" width="19" height="19" viewBox="0 0 24 24"><path d="M12 8.5a3.5 3.5 0 1 0 0 7 3.5 3.5 0 0 0 0-7z M10.3 2h3.4l.5 2.6 1.9.8 2.2-1.5 2.4 2.4-1.5 2.2.8 1.9 2.6.5v3.4l-2.6.5-.8 1.9 1.5 2.2-2.4 2.4-2.2-1.5-1.9.8-.5 2.6h-3.4l-.5-2.6-1.9-.8-2.2 1.5-2.4-2.4 1.5-2.2-.8-1.9L2 13.7v-3.4l2.6-.5.8-1.9-1.5-2.2 2.4-2.4 2.2 1.5 1.9-.8z" fill="none" stroke="#333" stroke-width="1.6" stroke-linejoin="round"/></svg>
</div>
</body></html>
